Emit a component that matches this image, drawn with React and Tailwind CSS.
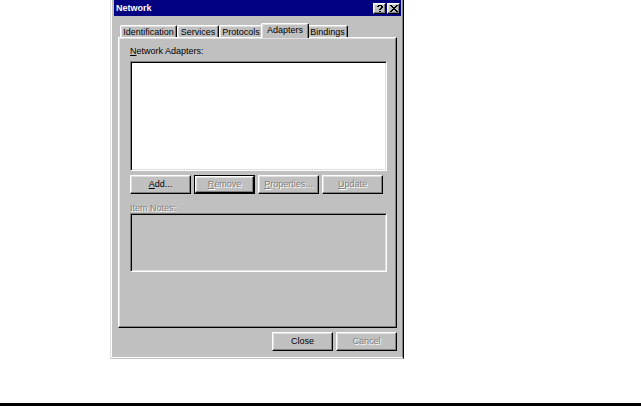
import React from "react";

const raised =
  "border border-t-white border-l-white border-r-black border-b-black shadow-[inset_-1px_-1px_0_#808080,inset_1px_1px_0_#dfdfdf] bg-[#c0c0c0]";
const sunken =
  "border border-t-[#808080] border-l-[#808080] border-r-white border-b-white shadow-[inset_1px_1px_0_#000,inset_-1px_-1px_0_#dfdfdf]";
const disabledText = "text-[#808080] [text-shadow:1px_1px_0_#ffffff]";

function Btn({ children, disabled, isDefault, w = "w-[61px]" }) {
  const inner = (
    <div
      className={`${raised} h-full w-full flex items-center justify-center ${
        disabled ? disabledText : "text-black"
      }`}
    >
      {children}
    </div>
  );
  if (isDefault) {
    return <div className={`${w} h-[19px] border border-black`}>{inner}</div>;
  }
  return <div className={`${w} h-[19px]`}>{inner}</div>;
}

function U({ children }) {
  return <span className="underline underline-offset-[1px] decoration-1">{children}</span>;
}

function Tab({ label, w, selected }) {
  if (selected) {
    return (
      <div
        className={`relative z-10 ${w} -mx-[2px] h-[15px] -mb-[1px] bg-[#c0c0c0] border-l border-t border-r border-l-white border-t-white border-r-black rounded-t-[2px] shadow-[inset_-1px_0_0_#808080,inset_1px_1px_0_#dfdfdf] flex items-center justify-center pb-[2px]`}
      >
        {label}
      </div>
    );
  }
  return (
    <div
      className={`${w} h-[12px] bg-[#c0c0c0] border-l border-t border-r border-l-white border-t-white border-r-black rounded-t-[2px] shadow-[inset_-1px_0_0_#808080,inset_1px_1px_0_#dfdfdf] flex items-center justify-center pt-[2px]`}
    >
      {label}
    </div>
  );
}

function HelpGlyph() {
  const px = [
    [1, 0], [2, 0], [3, 0], [4, 0],
    [0, 1], [1, 1], [4, 1], [5, 1],
    [4, 2], [5, 2],
    [3, 3], [4, 3],
    [2, 4], [3, 4],
    [2, 6], [3, 6],
  ];
  return (
    <svg width="6" height="7" viewBox="0 0 6 7" shapeRendering="crispEdges">
      {px.map(([x, y], i) => (
        <rect key={i} x={x} y={y} width="1" height="1" fill="#000" />
      ))}
    </svg>
  );
}

function CloseGlyph() {
  const rows = [
    "XX....XX",
    ".XX..XX.",
    "..XXXX..",
    "...XX...",
    "..XXXX..",
    ".XX..XX.",
    "XX....XX",
  ];
  const px = [];
  rows.forEach((r, y) =>
    r.split("").forEach((c, x) => {
      if (c === "X") px.push([x, y]);
    })
  );
  return (
    <svg width="8" height="7" viewBox="0 0 8 7" shapeRendering="crispEdges">
      {px.map(([x, y], i) => (
        <rect key={i} x={x} y={y} width="1" height="1" fill="#000" />
      ))}
    </svg>
  );
}

export default function App() {
  return (
    <div
      className="w-[641px] h-[406px] bg-white flex flex-col text-[9px] leading-[11px] text-black"
      style={{ fontFamily: '"Liberation Sans", Arial, sans-serif' }}
    >
      <div className="ml-[110px] w-[294px] h-[359px] border-l border-r border-b border-l-[#dfdfdf] border-r-black border-b-[#c0c0c0]">
        <div className="h-full border-l border-r border-b border-l-white border-r-[#808080] border-b-white bg-[#c0c0c0] pl-[2px] pr-[1px]">
          {/* Title bar */}
          <div className="h-[16px] bg-[#000080] flex items-center justify-between pl-[2px] pr-[1px]">
            <span className="text-white font-bold">Network</span>
            <div className="flex gap-[1px]">
              <div className={`${raised} w-[13px] h-[11px] flex items-center justify-center`}>
                <HelpGlyph />
              </div>
              <div className={`${raised} w-[13px] h-[11px] flex items-center justify-center`}>
                <CloseGlyph />
              </div>
            </div>
          </div>

          <div className="ml-[4px] w-[279px]">
            {/* Tabs */}
            <div className="mt-[7px] h-[14px] flex items-end pl-[2px]">
              <Tab label="Identification" w="w-[57px]" />
              <Tab label="Services" w="w-[42px]" />
              <Tab label="Protocols" w="w-[44px]" />
              <Tab label="Adapters" w="w-[48px]" selected />
              <Tab label="Bindings" w="w-[41px]" />
            </div>

            {/* Page */}
            <div className="h-[291px] border border-t-white border-l-white border-r-black border-b-black shadow-[inset_-1px_-1px_0_#808080,inset_1px_1px_0_#dfdfdf] pl-[11px] pt-[8px]">
              <div className="h-[11px]">
                <U>N</U>etwork Adapters:
              </div>
              <div className={`${sunken} mt-[4px] w-[257px] h-[110px] bg-white`} />
              <div className="mt-[4px] flex gap-[3px]">
                <Btn>
                  <span>
                    <U>A</U>dd...
                  </span>
                </Btn>
                <Btn disabled isDefault>
                  <span>
                    <U>R</U>emove
                  </span>
                </Btn>
                <Btn disabled>
                  <span>
                    <U>P</U>roperties...
                  </span>
                </Btn>
                <Btn disabled>
                  <span>
                    <U>U</U>pdate
                  </span>
                </Btn>
              </div>
              <div className={`mt-[9px] h-[10px] leading-[10px] ${disabledText}`}>Item Notes:</div>
              <div className={`${sunken} w-[257px] h-[59px] bg-[#c0c0c0]`} />
            </div>

            {/* Bottom buttons */}
            <div className="mt-[4px] flex justify-end gap-[3px]">
              <Btn>Close</Btn>
              <Btn disabled>Cancel</Btn>
            </div>
          </div>
        </div>
      </div>
      <div className="mt-auto h-[3px] bg-black" />
    </div>
  );
}
